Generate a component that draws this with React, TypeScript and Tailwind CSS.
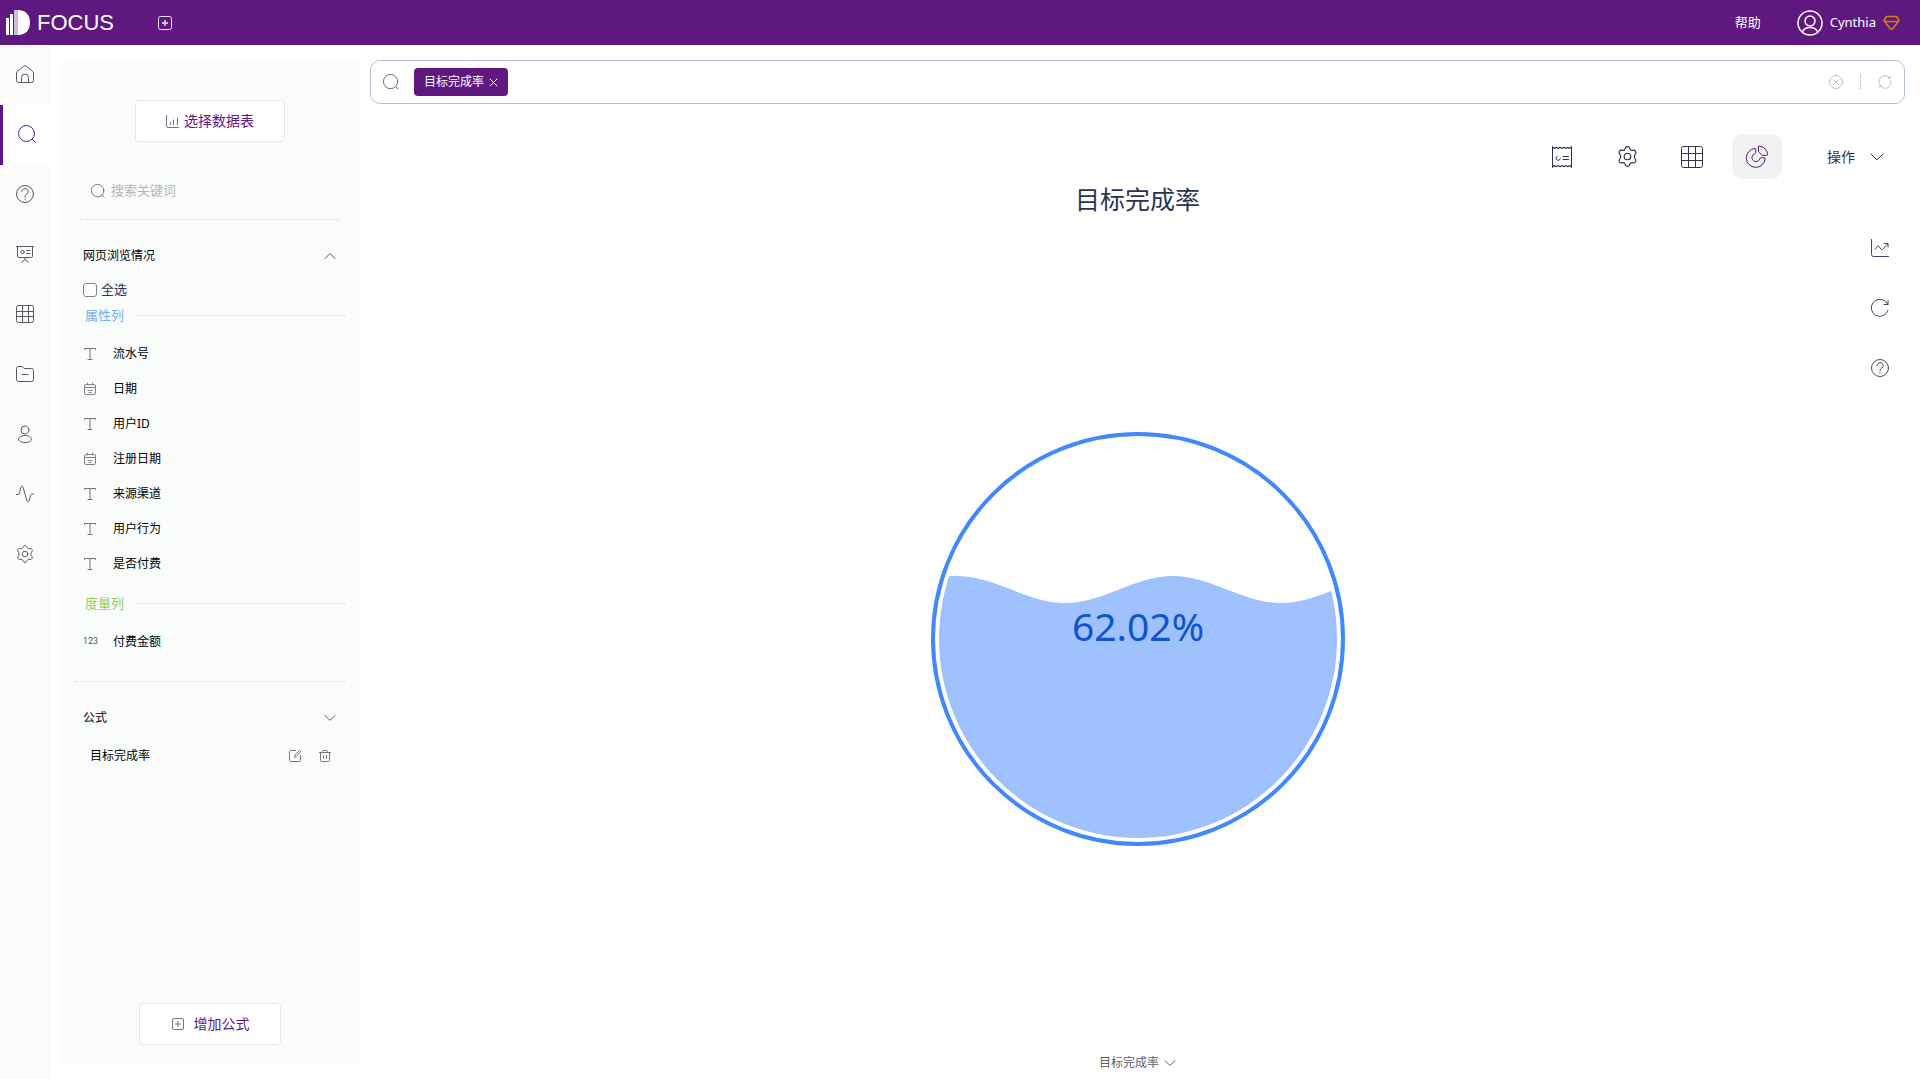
import type { ReactNode } from "react";

type IconProps = { size?: number; className?: string };

function Svg({ size = 18, box = 18, className = "", children }: IconProps & { box?: number; children: ReactNode }) {
  return (
    <svg
      width={size}
      height={size}
      viewBox={`0 0 ${box} ${box}`}
      fill="none"
      stroke="currentColor"
      strokeWidth="1"
      strokeLinecap="round"
      strokeLinejoin="round"
      className={`shrink-0 ${className}`}
      aria-hidden="true"
    >
      {children}
    </svg>
  );
}

const HomeIcon = (p: IconProps) => (
  <Svg {...p}>
    <path d="M.5 8V15.500a2 2 0 0 0 2 2h13a2 2 0 0 0 2-2V8a2 2 0 0 0-.8-1.600L10.300 1.300a2 2 0 0 0-2.600 0L1.300 6.400A2 2 0 0 0 .5 8z" />
    <path d="M5.500 17.500V12.500a3.500 3.500 0 0 1 7 0v5" />
  </Svg>
);
const SearchIcon = (p: IconProps) => (
  <Svg {...p}>
    <circle cx="8.500" cy="8.500" r="8" />
    <path d="M14.500 14.500l2.500 2.500" />
  </Svg>
);
const HelpIcon = (p: IconProps) => (
  <Svg {...p}>
    <circle cx="9" cy="9" r="8.500" />
    <path d="M5.800 6.500a3.200 3 0 1 1 5 2.500C9.600 9.800 9 10.200 9 12" />
    <path d="M9 14v.4" />
  </Svg>
);
const BoardIcon = (p: IconProps) => (
  <Svg {...p}>
    <path d="M.5 1.500h17M1.500 1.500v10a1 1 0 0 0 1 1h13a1 1 0 0 0 1-1v-10" />
    <circle cx="6.500" cy="7" r="1.700" />
    <path d="M10.500 5.500h3.500M10.500 8.500h3.500M9 12.500v2M5.500 17.200L9 14.500l3.500 2.700" />
  </Svg>
);
const GridIcon = (p: IconProps) => (
  <Svg {...p}>
    <rect x=".5" y=".5" width="17" height="17" rx="2" />
    <path d="M6.500.5v17M12.500.5v17M.5 6.500h17M.5 11.500h17" />
  </Svg>
);
const LargeGridIcon = () => (
  <Svg size={22} box={22}>
    <rect x=".5" y=".5" width="21" height="21" rx="2" />
    <path d="M7.500.5v21M14.500.5v21M.5 7.500h21M.5 14.500h21" />
  </Svg>
);
const FolderIcon = (p: IconProps) => (
  <Svg {...p}>
    <path d="M.5 3.500a2 2 0 0 1 2-2h3.800L8 3.500h7.500a2 2 0 0 1 2 2v9a2 2 0 0 1-2 2h-13a2 2 0 0 1-2-2z" />
    <path d="M6 9.500h6" />
  </Svg>
);
const UserIcon = (p: IconProps) => (
  <Svg {...p}>
    <circle cx="9" cy="5" r="4" />
    <path d="M2.500 14.200c0-2 2.900-3.700 6.500-3.700s6.500 1.700 6.500 3.700-2.900 3.300-6.500 3.300-6.500-1.300-6.500-3.300z" />
  </Svg>
);
const PulseIcon = (p: IconProps) => (
  <Svg {...p}>
    <path d="M.5 9.500H2c1 0 1.300-.8 1.600-2L4.700 2.800c.6-2.300 2-2.300 2.600 0l3.400 12.400c.6 2.300 2 2.300 2.600 0l1.100-4.200c.4-1.300.8-2 1.900-2h1.200" />
  </Svg>
);
const GearIcon = (p: IconProps) => (
  <Svg {...p}>
    <path d="M7.300 1.500C7.800.3 10.200.3 10.700 1.500l.5 1.200c.3.700 1 1.100 1.800 1l1.300-.2c1.300-.2 2.500 1.900 1.700 2.900l-.8 1.100c-.4.900-.4 2.100 0 3l.8 1.100c.8 1-.4 3.100-1.700 2.900l-1.300-.2c-.8-.1-1.500.3-1.800 1l-.5 1.200c-.5 1.200-2.900 1.200-3.400 0l-.5-1.200c-.3-.7-1-1.100-1.800-1l-1.300.2c-1.300.2-2.500-1.900-1.700-2.900l.8-1.100c.4-.9.4-2.100 0-3L2 6.400c-.8-1 .4-3.100 1.700-2.900l1.300.2c.8.1 1.500-.3 1.800-1z" />
    <circle cx="9" cy="9" r="2.800" />
  </Svg>
);
const ChevronDown = ({ size = 12, className }: IconProps) => (
  <Svg size={size} box={size} className={className}>
    {size === 16 ? <path d="M2 5l5.200 5.200a1 1 0 0 0 1.600 0L14 5" /> : <path d="M1 3.500l4.300 4.300a1 1 0 0 0 1.400 0L11 3.500" />}
  </Svg>
);
const ChevronUp = ({ className }: IconProps) => (
  <Svg size={12} box={12} className={className}>
    <path d="M1 8.500l4.300-4.300a1 1 0 0 1 1.400 0L11 8.500" />
  </Svg>
);
const PlusBox = ({ size = 14, className }: IconProps) => (
  <Svg size={size} box={14} className={className}>
    <rect x="1.500" y="1.500" width="11" height="11" rx="1.500" />
    <path d="M7 4.500v5M4.500 7h5" />
  </Svg>
);
const BarsIcon = ({ className }: IconProps) => (
  <Svg size={13} box={13} className={className}>
    <path d="M.5.5v10.500a1.500 1.500 0 0 0 1.500 1.500h10.500M4.500 9.500v-2M7.500 9.500V5M11.500 9.500V3" />
  </Svg>
);
const TextType = () => (
  <Svg size={14} box={14} className="text-[#77727f]">
    <path d="M1.500 2.500v-1h11v1M7 1.500v11M5 12.500h4" />
  </Svg>
);
const DateType = () => (
  <Svg size={14} box={14} className="text-[#85808c]">
    <rect x="1.500" y="2.500" width="11" height="10" rx="1.500" />
    <path d="M1.500 5.500h11M4.500 1v2M9.500 1v2M5 8.500h4M6 10.500h2" />
  </Svg>
);
const NumberType = () => (
  <span className="w-[14px] whitespace-nowrap font-['Roboto',sans-serif] text-[9px] leading-none text-[#555]" aria-hidden="true">
    123
  </span>
);
const EditIcon = () => (
  <Svg size={14} box={14}>
    <path d="M7.500 1.500h-5a1 1 0 0 0-1 1v9a1 1 0 0 0 1 1h9a1 1 0 0 0 1-1V6.500" />
    <path d="M6.500 8l.5-2L11.500 1.500l1.200 1.200L8.500 7.300z" />
  </Svg>
);
const TrashIcon = () => (
  <Svg size={14} box={14}>
    <path d="M1.500 3.500h11M2.500 3.500v8a1 1 0 0 0 1 1h7a1 1 0 0 0 1-1v-8M4.500 3.500v-1a1 1 0 0 1 1-1h3a1 1 0 0 1 1 1v1M5.500 6.500v3M8.500 6.500v3" />
  </Svg>
);
const ReceiptIcon = () => (
  <Svg size={22} box={22}>
    <path d="M1.500 1v20M20.500 1v20" />
    <path d="M1.500 1l1.800 1.500L5.200 1.300 7.200 2.500 9.100 1.300 11 2.500 12.900 1.300 14.800 2.500 16.800 1.300 18.700 2.500 20.500 1M1.500 21l1.800-1.500L5.200 20.700 7.200 19.500 9.100 20.700 11 19.500 12.900 20.700 14.800 19.500 16.800 20.700 18.700 19.500 20.500 21" strokeWidth="1.200" />
    <path d="M6.200 10A2.300 2.300 0 1 0 9.500 12.500M12 10.500h5.500M12 13.500h5.500" />
  </Svg>
);
const PieIcon = () => (
  <Svg size={24} box={24}>
    <path d="M9.700 3.400a9.500 9.500 0 1 0 10.500 10.500c.1-.7-.3-1.100-1-1.100h-3.200c-.6 0-1 .3-1.200.9a4 4 0 1 1-5.200-4.900c.7-.3 1.100-.7 1.100-1.300V4.400c0-.7-.4-1.100-1-1z" />
    <path d="M13.500 1.900v4.200c0 .6.200 1 .7 1.300 1 .7 1.600 1.300 2.200 2.200.3.500.7.800 1.300.8h4c.7 0 1.100-.4 1-1A9.500 9.500 0 0 0 14.500 1c-.6-.1-1 .3-1 .9z" />
  </Svg>
);
const TrendIcon = () => (
  <Svg>
    <path d="M.5.5v15a2 2 0 0 0 2 2h15M4 10.500l3-3.500 1 .5 2.200 3 1.300 0 5-5.500M13 4.500h4v3.500" />
  </Svg>
);
const ReloadIcon = () => (
  <Svg>
    <path d="M16.900 11.500A8.500 8.500 0 1 1 15 3l2 2.500M17 1.500v4h-4" />
  </Svg>
);
const SyncIcon = () => (
  <Svg size={14} box={14}>
    <path d="M1.200 8.500A6 6 0 0 1 12 3.500M12.800 5.500A6 6 0 0 1 2 10.500M12.200 1.500v2h-2M1.800 12.500v-2h2" />
  </Svg>
);
const ClearIcon = () => (
  <Svg size={14} box={14}>
    <circle cx="7" cy="7" r="6.500" />
    <path d="M4.500 4.500l5 5M9.500 4.500l-5 5" />
  </Svg>
);

const navItems = [
  { label: "首页", Icon: HomeIcon, active: false },
  { label: "搜索", Icon: SearchIcon, active: true },
  { label: "问答", Icon: HelpIcon, active: false },
  { label: "看板", Icon: BoardIcon, active: false },
  { label: "数据表", Icon: GridIcon, active: false },
  { label: "资源", Icon: FolderIcon, active: false },
  { label: "用户", Icon: UserIcon, active: false },
  { label: "监控", Icon: PulseIcon, active: false },
  { label: "设置", Icon: GearIcon, active: false },
];

const attributes = [
  { name: "流水号", Type: TextType },
  { name: "日期", Type: DateType },
  { name: "用户ID", Type: TextType },
  { name: "注册日期", Type: DateType },
  { name: "来源渠道", Type: TextType },
  { name: "用户行为", Type: TextType },
  { name: "是否付费", Type: TextType },
];

function Header() {
  return (
    <header className="flex h-[45px] items-center justify-between bg-[#5e187f] pr-5 text-white">
      <div className="flex items-center">
        <a href="#" className="flex items-center gap-[6px] pl-[6px]">
          <svg width="25" height="25" viewBox="0 0 25 25" fill="#fff" aria-hidden="true">
            <path d="M0 8h3v17H0zM4 4h3v21H4z" />
            <path d="M8 0h4v25H8z" fillOpacity=".7" />
            <path d="M12 0c8 0 12 5.500 12 12.500S20 25 12 25z" />
          </svg>
          <span className="font-['Liberation_Sans',sans-serif] text-[22px] leading-[26px]">FOCUS</span>
        </a>
        <button aria-label="新建" className="ml-[43px] text-[#ece3f1]">
          <svg width="16" height="16" viewBox="0 0 16 16" fill="none" stroke="currentColor" aria-hidden="true">
            <rect x="1.500" y="1.500" width="13" height="13" rx="2" />
            <path d="M8 5v6M5 8h6" strokeWidth="1.400" />
          </svg>
        </button>
      </div>
      <div className="flex items-center text-[13px]">
        <a href="#">帮助</a>
        <button className="ml-9 flex items-center gap-[7px]">
          <svg width="26" height="26" viewBox="0 0 26 26" fill="none" stroke="currentColor" strokeWidth="1.500" aria-hidden="true">
            <circle cx="13" cy="13" r="12" />
            <circle cx="13" cy="11" r="5" />
            <path d="M5.500 22c1-3 4-4.500 7.500-4.500s6.500 1.500 7.500 4.500" />
          </svg>
          <span>Cynthia</span>
          <svg width="17" height="16" viewBox="0 0 17 16" fill="none" stroke="#d07c12" strokeWidth="1.600" strokeLinejoin="round" aria-hidden="true">
            <path d="M3.500 1.500h10L16 5.500 10 13.500q-1.500 1.400-3 0L1 5.500zM1.500 6.500h14" />
          </svg>
        </button>
      </div>
    </header>
  );
}

function NavRail() {
  return (
    <nav className="flex w-[50px] shrink-0 flex-col bg-[#fafcfb] text-[#5c5566]">
      {navItems.map(({ label, Icon, active }) => (
        <a
          key={label}
          href="#"
          aria-label={label}
          className={
            active
              ? "flex h-[60px] items-center justify-center border-l-[3px] border-[#5e187f] bg-white pb-[2px] text-[#5e187f]"
              : "flex h-[60px] items-center justify-center pb-[2px]"
          }
        >
          <Icon />
        </a>
      ))}
    </nav>
  );
}

function GroupTitle({ children, className }: { children: ReactNode; className: string }) {
  return (
    <div className="flex h-5 items-center pl-[10px]">
      <h3 className={`w-[49px] text-[13px] leading-5 ${className}`}>{children}</h3>
      <span className="flex-1 border-t border-dotted border-[#d3d7dc]" />
    </div>
  );
}

function Field({ name, Type }: { name: string; Type: () => ReactNode }) {
  return (
    <li className="flex h-[35px] items-center gap-4 pl-2 text-xs text-black">
      <Type />
      {name}
    </li>
  );
}

function DataPanel() {
  return (
    <aside className="mx-[10px] mt-[15px] mb-[14px] flex w-[300px] shrink-0 flex-col rounded-lg bg-[#fafcfb] px-[15px] pb-5">
      <button className="mt-10 flex h-[42px] w-[150px] items-center justify-center gap-[5px] self-center rounded border border-[#e6e8ec] bg-white text-sm text-[#5e187f]">
        <BarsIcon className="text-[#7d6b8c]" />
        选择数据表
      </button>

      <div className="mx-[5px] mt-7 flex h-[50px] items-center gap-[6px] border-b border-dotted border-[#d3d7dc] pb-2 pl-[11px] text-[#5c5566]">
        <SearchIcon size={14} />
        <input
          type="text"
          aria-label="搜索关键词"
          placeholder="搜索关键词"
          className="min-w-0 flex-1 bg-transparent text-[13px] outline-none placeholder:text-[#b5b5b5]"
        />
      </div>

      <button className="mt-[21px] flex h-[30px] items-center justify-between pr-[9px] pl-2 text-xs text-black">
        网页浏览情况
        <ChevronUp className="text-[#5c5566]" />
      </button>
      <label className="mt-2 flex h-[22px] items-center gap-1 pl-2 text-[13px] text-[#2c3350]">
        <input
          type="checkbox"
          className="size-[14px] appearance-none rounded-[3px] border border-[#85808c] bg-white checked:bg-[#5e187f]"
        />
        全选
      </label>

      <div className="mt-1">
        <GroupTitle className="text-[#6fb1ea]">属性列</GroupTitle>
      </div>
      <ul className="mt-[11px]">
        {attributes.map((f) => (
          <Field key={f.name} {...f} />
        ))}
      </ul>
      <div className="mt-3">
        <GroupTitle className="text-[#8fd14f]">度量列</GroupTitle>
      </div>
      <ul className="mt-[11px]">
        <Field name="付费金额" Type={NumberType} />
      </ul>

      <section className="mt-[22px] border-t border-dotted border-[#d3d7dc] pt-[21px]">
        <button className="flex h-[30px] w-full items-center justify-between pr-[9px] pl-2 text-xs text-black">
          公式
          <ChevronDown className="text-[#5c5566]" />
        </button>
        <div className="mt-2 flex h-[30px] items-center justify-between pr-[13px] pl-[15px] text-xs text-black">
          目标完成率
          <span className="flex gap-4 text-[#77727f]">
            <button aria-label="编辑">
              <EditIcon />
            </button>
            <button aria-label="删除">
              <TrashIcon />
            </button>
          </span>
        </div>
      </section>

      <button className="mt-auto flex h-[42px] w-[142px] items-center justify-center gap-[9px] self-center rounded border border-[#e6e8ec] bg-white text-sm text-[#5e187f]">
        <PlusBox className="text-[#7d6b8c]" />
        增加公式
      </button>
    </aside>
  );
}

function SearchBar() {
  return (
    <div className="flex h-[44px] items-center rounded-[10px] border border-[#b3c2d2] pr-3 pl-3">
      <SearchIcon size={16} className="text-[#5c5566]" />
      <span className="ml-[15px] flex h-7 items-center gap-[5px] rounded bg-[#5e187f] px-[10px] text-xs text-white">
        目标完成率
        <button aria-label="移除">
          <svg width="9" height="9" viewBox="0 0 9 9" fill="none" stroke="currentColor" aria-hidden="true">
            <path d="M.8.8l7.400 7.400M8.200.8L.8 8.200" />
          </svg>
        </button>
      </span>
      <input type="text" aria-label="搜索" className="mx-3 min-w-0 flex-1 bg-transparent text-xs outline-none" />
      <div className="flex items-center text-[#bcc0c6]">
        <button aria-label="清空">
          <ClearIcon />
        </button>
        <span className="mx-[17px] h-[14px] border-l border-dotted border-[#a9afb8]" />
        <button aria-label="刷新">
          <SyncIcon />
        </button>
      </div>
    </div>
  );
}

function Toolbar() {
  const button = "flex h-[45px] w-[50px] items-center justify-center rounded-[10px]";
  return (
    <div className="mt-[30px] flex items-center justify-end gap-[15px] pr-5 text-[#2c3350]">
      <button aria-label="明细" className={button}>
        <ReceiptIcon />
      </button>
      <button aria-label="设置" className={button}>
        <GearIcon size={21} />
      </button>
      <button aria-label="表格" className={button}>
        <LargeGridIcon />
      </button>
      <button aria-label="图表" className={`${button} bg-[#f1f3f3] text-[#5e187f]`}>
        <PieIcon />
      </button>
      <button className="ml-[30px] flex items-center gap-[14px] text-sm">
        操作
        <ChevronDown size={16} />
      </button>
    </div>
  );
}

function LiquidGauge() {
  return (
    <svg viewBox="0 0 414 414" className="w-[414px]" role="img" aria-label="目标完成率 62.02%">
      <defs>
        <clipPath id="gauge">
          <circle cx="207" cy="207" r="199" />
        </clipPath>
      </defs>
      <circle cx="207" cy="207" r="205" fill="none" stroke="#4088fc" strokeWidth="4" />
      <path
        clipPath="url(#gauge)"
        fill="#9fc2fe"
        d="M-82 171C-43 171-13 144 26 144S95 171 134 171 203 144 242 144 311 171 350 171 419 144 458 144V414H-82z"
      />
      <text x="207" y="209" textAnchor="middle" fill="#0e54cc" className="font-['Noto_Sans',sans-serif] text-[39px]">
        62.02%
      </text>
    </svg>
  );
}

function Workspace() {
  return (
    <main className="mt-[15px] mr-[15px] flex min-w-0 flex-1 flex-col">
      <SearchBar />
      <Toolbar />
      <h1 className="mt-[2px] text-center text-[25px] leading-9 text-[#2c3350]">目标完成率</h1>
      <div className="grid flex-1 grid-cols-[1fr_auto_1fr]">
        <div className="col-start-2 flex items-center pt-2">
          <LiquidGauge />
        </div>
        <div className="flex w-[50px] flex-col justify-self-end pt-px text-[#4a4660]">
          <button aria-label="趋势" className="flex h-[60px] items-center justify-center">
            <TrendIcon />
          </button>
          <button aria-label="重新加载" className="flex h-[60px] items-center justify-center">
            <ReloadIcon />
          </button>
          <button aria-label="帮助" className="flex h-[60px] items-center justify-center">
            <HelpIcon />
          </button>
        </div>
      </div>
      <button className="mb-[6px] flex h-5 items-center gap-[5px] self-center text-xs text-[#5f5c66]">
        目标完成率
        <ChevronDown />
      </button>
    </main>
  );
}

export default function App() {
  return (
    <div className="flex min-h-screen flex-col bg-white font-['Noto_Sans','Noto_Sans_CJK_SC',sans-serif]">
      <Header />
      <div className="flex flex-1">
        <NavRail />
        <DataPanel />
        <Workspace />
      </div>
    </div>
  );
}
